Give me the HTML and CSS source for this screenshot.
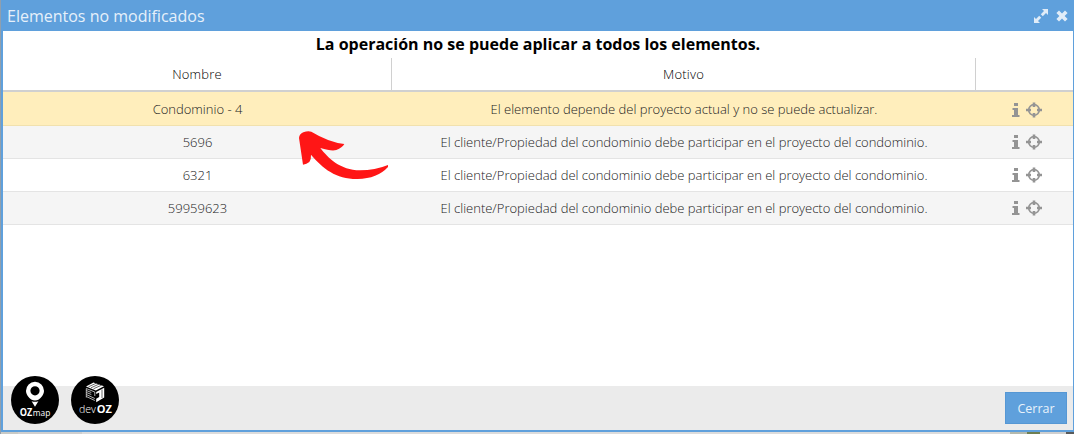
FILE: index.html
```
<!DOCTYPE html>
<html lang="es">
<head>
    <meta charset="UTF-8">
    <meta name="viewport" content="width=device-width, initial-scale=1.0">
    <title>Elementos no modificados</title>
    <link rel="stylesheet" href="styles.css">
</head>
<body>
    <!-- Shared icons -->
    <svg class="sprite">
        <symbol id="info" viewBox="0 0 8 16">
            <path d="M2 1h4v3H2zM0.500 6h5.500v7h1.500v2H0v-2h2V8H0.500z"/>
        </symbol>
        <symbol id="target" viewBox="0 0 16 16">
            <circle cx="8" cy="8" r="5.3" fill="none" stroke="currentColor" stroke-width="1.7"/>
            <path d="M6.7 0.500h2.600v4.500H6.700zM6.700 11h2.600v4.500H6.700zM0 6.700h5v2.600H0zM11 6.700h5v2.600h-5z"/>
        </symbol>
    </svg>

    <div class="window">
        <div class="window-head">
            <span class="window-title">Elementos no modificados</span>
            <svg class="head-icon" width="16" height="16" viewBox="0 0 16 16">
                <path d="M9 1h6v6l-2-2-3.2 3.2-2-2L11 3zM7 15H1V9l2 2 3.2-3.2 2 2L5 13z"/>
            </svg>
            <svg class="head-icon" width="12" height="12" viewBox="0 0 12 12">
                <path d="M3 .4L6 3.4l3-3L11.6 3l-3 3 3 3L9 11.6l-3-3-3 3L.4 9l3-3-3-3z"/>
            </svg>
        </div>

        <div class="message">La operación no se puede aplicar a todos los elementos.</div>

        <div class="table">
            <div class="row row-head">
                <div class="cell">Nombre</div>
                <div class="cell">Motivo</div>
                <div class="cell"></div>
            </div>
            <div class="row selected">
                <div class="cell">Condominio - 4</div>
                <div class="cell">El elemento depende del proyecto actual y no se puede actualizar.</div>
                <div class="cell actions">
                    <svg class="info"><use href="#info"/></svg>
                    <svg class="target"><use href="#target"/></svg>
                </div>
            </div>
            <div class="row odd">
                <div class="cell">5696</div>
                <div class="cell">El cliente/Propiedad del condominio debe participar en el proyecto del condominio.</div>
                <div class="cell actions">
                    <svg class="info"><use href="#info"/></svg>
                    <svg class="target"><use href="#target"/></svg>
                </div>
            </div>
            <div class="row">
                <div class="cell">6321</div>
                <div class="cell">El cliente/Propiedad del condominio debe participar en el proyecto del condominio.</div>
                <div class="cell actions">
                    <svg class="info"><use href="#info"/></svg>
                    <svg class="target"><use href="#target"/></svg>
                </div>
            </div>
            <div class="row odd">
                <div class="cell">59959623</div>
                <div class="cell">El cliente/Propiedad del condominio debe participar en el proyecto del condominio.</div>
                <div class="cell actions">
                    <svg class="info"><use href="#info"/></svg>
                    <svg class="target"><use href="#target"/></svg>
                </div>
            </div>
        </div>

        <div class="window-foot">
            <button class="close-btn">Cerrar</button>
        </div>
    </div>

    <div class="logos">
        <svg class="logo" viewBox="0 0 48 48">
            <circle cx="24" cy="24" r="24"/>
            <path class="mark" fill-rule="evenodd" d="M24 5.800a9 9 0 0 1 9 9c0 4-3 7-5.200 8.800q-3.800 1.800-7.600 0C18 21.800 15 18.800 15 14.800a9 9 0 0 1 9-9zm0 4.400a4.600 4.600 0 1 0 0 9.200 4.600 4.600 0 0 0 0-9.200zM20.600 25.200q3.400 1.200 6.800 0L24 30.800z"/>
            <text class="oz-small" x="8.800" y="40" textLength="12.500" lengthAdjust="spacingAndGlyphs">OZ</text>
            <text class="map" x="21.800" y="40" textLength="17.500" lengthAdjust="spacingAndGlyphs">map</text>
        </svg>
        <svg class="logo" viewBox="0 0 48 48">
            <circle cx="24" cy="24" r="24"/>
            <path class="mark" d="M15 10.500L22.500 6.500 33 10.200 24.800 14.500z"/>
            <path class="mark" d="M25.200 16l8-4.200v9.700l-8 4.800v-3.500l3-1.800v-4.500l-3 1.600z"/>
            <path class="cube-lines" d="M15.300 12.500l8.500 3.500M15.300 14.500l5 2M15.300 16.500l5 2M15.300 18.500l8.500 4M15.300 20.500l8.500 4M23.800 16v4M15.300 12.500v9"/>
            <path class="cube-gaps" d="M17.500 10.800l8-3.700M20 11.800l8-3.700M22.500 12.800l8-3.600M31 13.500v8.500"/>
            <text class="dev" x="8" y="37" textLength="17" lengthAdjust="spacingAndGlyphs">dev</text>
            <text class="oz" x="25.700" y="37">OZ</text>
        </svg>
    </div>

    <!-- Pointer to the selected row -->
    <svg class="arrow" viewBox="0 0 390 240">
        <path d="M57 84Q58 72 70 67Q84 61 94 65Q145 96 193 102Q187 113 169 120Q154 124 121 114C145 145 180 180 240 181Q285 181 324 165V171Q292 206 233 207C170 208 128 176 93 134Q94 148 88 156Q80 162 69 164Z"/>
    </svg>
</body>
</html>
```
FILE: styles.css
```
* {
    box-sizing: border-box;
}
body {
    margin: 0;
    height: 434px;
    overflow: hidden;
    font-family: "Open Sans", "Noto Sans", sans-serif;
    font-size: 13px;
    background: linear-gradient(90deg, #8f9fae 0 1px, #c9cac6 1px 18px, #cfcfcf 18px 82px, #dcdcdc 82px 1010px, #b4b9ad 1010px 1027px, #6f7f52 1027px 1040px, #cfcfcf 1040px 1066px, #5a5a5a 1066px);
}
.sprite {
    display: none;
}
.window {
    display: flex;
    flex-direction: column;
    height: 432px;
    margin-left: 1px;
    border: solid #5fa0dc;
    border-width: 0 1px 2px 2px;
    background: #fff;
}
.window-head {
    display: flex;
    align-items: center;
    flex: none;
    height: 31px;
    margin-left: -2px;
    padding: 1px 5px 0 6px;
    background: #5fa0dc;
    color: #e6f0fa;
}
.window-title {
    flex: 1;
    font-size: 16px;
}
.head-icon {
    fill: #e0ecf8;
    margin-left: 7px;
}
.message {
    flex: none;
    height: 27px;
    line-height: 26px;
    font-size: 16px;
    font-weight: bold;
    text-align: center;
    color: #000;
}
.row {
    display: grid;
    grid-template-columns: 389px 584px 1fr;
    height: 33px;
    border-bottom: 1px solid #e4e4e4;
    line-height: 33px;
    text-align: center;
    color: #222;
    font-weight: 300;
}
.row-head {
    grid-template-columns: 388px 584px 1fr;
    height: 34px;
    border-bottom: 2px solid #d0d0d0;
    letter-spacing: 0.2px;
    color: #000;
}
.row-head .cell + .cell {
    border-left: 1px solid #d0d0d0;
}
.selected {
    height: 34px;
    line-height: 35px;
    background: #ffeebc;
    border-color: #f1e1ae;
}
.odd {
    background: #f5f5f5;
}
.actions {
    display: flex;
    align-items: center;
    padding: 0 0 1px 36px;
    color: #949494;
    fill: #949494;
}
.selected .actions {
    padding-bottom: 0;
}
.info {
    width: 8px;
    height: 16px;
}
.target {
    width: 16px;
    height: 16px;
    margin-left: 6px;
}
.window-foot {
    display: flex;
    justify-content: flex-end;
    margin-top: auto;
    height: 44px;
    padding: 6px 6px 6px 0;
    background: #ebebeb;
}
.close-btn {
    width: 62px;
    height: 32px;
    padding: 0;
    border: 1px solid #5597d4;
    background: #5fa0dc;
    color: #e8f2fb;
    font-family: inherit;
    font-size: 12.5px;
}
.logos {
    position: absolute;
    left: 11px;
    top: 376px;
    display: flex;
    gap: 12px;
}
.logo {
    width: 48px;
    height: 48px;
}
.logo text {
    fill: #fff;
}
.mark {
    fill: #fff;
}
.cube-lines {
    fill: none;
    stroke: #ddd;
    stroke-width: 0.8;
}
.cube-gaps {
    fill: none;
    stroke: #000;
    stroke-width: 0.6;
}
.oz-small {
    font-size: 10px;
    font-weight: bold;
}
.map {
    font-size: 9.5px;
}
.dev {
    font-size: 11px;
    font-weight: 300;
}
.oz {
    font-size: 11px;
    font-weight: bold;
}
.arrow {
    position: absolute;
    left: 280px;
    top: 110px;
    width: 130px;
    height: 80px;
    fill: #ff1616;
}
```
